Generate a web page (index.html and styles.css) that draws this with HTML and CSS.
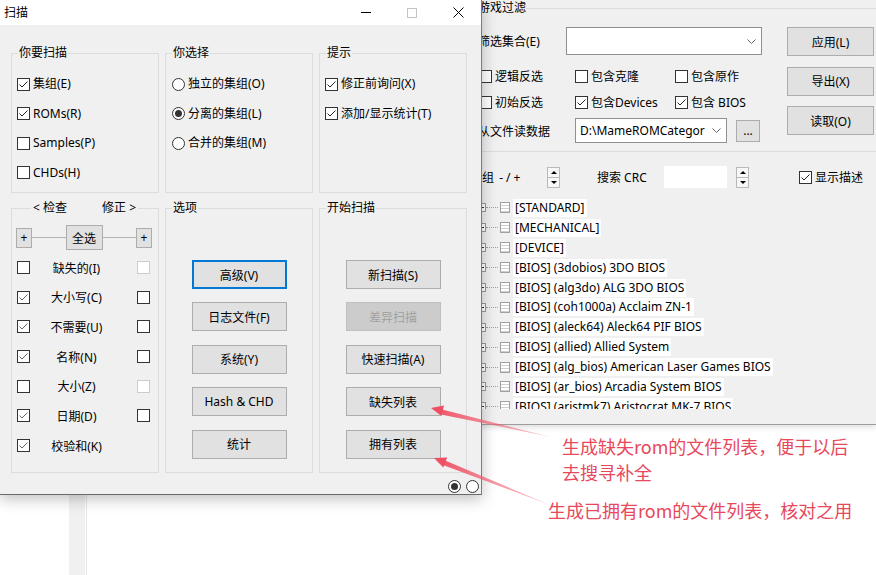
FILE: index.html
```html
<!DOCTYPE html>
<html lang="zh-CN">
<head>
    <meta charset="UTF-8">
    <meta name="viewport" content="width=device-width, initial-scale=1.0">
    <title>扫描</title>
    <link rel="stylesheet" href="styles.css">
</head>
<body>
<div class="desktop">
    <div class="side-strip"></div>

    <!-- background window: game filter -->
    <div class="main-window">
        <div class="group filter">
            <div class="group-title">游戏过滤</div>
            <div class="filter-body">
                <div class="filter-form">
                    <div class="frow frow-set">
                        <span class="flabel w88">筛选集合(E)</span>
                        <div class="combo combo-set">
                            <svg width="9" height="5" viewBox="0 0 9 5"><path d="M0.5 0.5L4.5 4.5L8.5 0.5" fill="none" stroke="#666"/></svg>
                        </div>
                    </div>
                    <div class="frow frow-chk">
                        <label class="fchk first"><span class="cb"></span>逻辑反选</label>
                        <label class="fchk"><span class="cb"></span>包含克隆</label>
                        <label class="fchk last"><span class="cb"></span>包含原作</label>
                    </div>
                    <div class="frow frow-chk second">
                        <label class="fchk first"><span class="cb"></span>初始反选</label>
                        <label class="fchk"><span class="cb"><svg viewBox="0 0 11 11"><path d="M1.5 5.5L4 8L9.5 2.5"/></svg></span>包含Devices</label>
                        <label class="fchk last"><span class="cb"><svg viewBox="0 0 11 11"><path d="M1.5 5.5L4 8L9.5 2.5"/></svg></span>包含 BIOS</label>
                    </div>
                    <div class="frow frow-file">
                        <span class="flabel w97">从文件读数据</span>
                        <div class="combo combo-file">
                            <span>D:\MameROMCategor</span>
                            <svg width="9" height="5" viewBox="0 0 9 5"><path d="M0.5 0.5L4.5 4.5L8.5 0.5" fill="none" stroke="#666"/></svg>
                        </div>
                        <button class="btn dots-btn">...</button>
                    </div>
                </div>
                <div class="filter-buttons">
                    <button class="btn">应用(L)</button>
                    <button class="btn">导出(X)</button>
                    <button class="btn">读取(O)</button>
                </div>
            </div>
        </div>

        <div class="search-row">
            <span class="slabel">集组 <span class="pm">-/+</span></span>
            <span class="spin"><span class="up"></span><span class="down"></span></span>
            <span class="slabel crc">搜索 CRC</span>
            <span class="crc-input"></span>
            <span class="spin spin2"><span class="up"></span><span class="down"></span></span>
            <label class="fchk desc"><span class="cb"><svg viewBox="0 0 11 11"><path d="M1.5 5.5L4 8L9.5 2.5"/></svg></span>显示描述</label>
        </div>

        <ul class="tree">
            <li><span class="exp"></span><span class="twig"></span><span class="doc"></span><span class="tlabel">[STANDARD]</span></li>
            <li><span class="exp"></span><span class="twig"></span><span class="doc"></span><span class="tlabel">[MECHANICAL]</span></li>
            <li><span class="exp"></span><span class="twig"></span><span class="doc"></span><span class="tlabel">[DEVICE]</span></li>
            <li><span class="exp"></span><span class="twig"></span><span class="doc"></span><span class="tlabel">[BIOS] (3dobios) 3DO BIOS</span></li>
            <li><span class="exp"></span><span class="twig"></span><span class="doc"></span><span class="tlabel">[BIOS] (alg3do) ALG 3DO BIOS</span></li>
            <li><span class="exp"></span><span class="twig"></span><span class="doc"></span><span class="tlabel">[BIOS] (coh1000a) Acclaim ZN-1</span></li>
            <li><span class="exp"></span><span class="twig"></span><span class="doc"></span><span class="tlabel">[BIOS] (aleck64) Aleck64 PIF BIOS</span></li>
            <li><span class="exp"></span><span class="twig"></span><span class="doc"></span><span class="tlabel">[BIOS] (allied) Allied System</span></li>
            <li><span class="exp"></span><span class="twig"></span><span class="doc"></span><span class="tlabel">[BIOS] (alg_bios) American Laser Games BIOS</span></li>
            <li><span class="exp"></span><span class="twig"></span><span class="doc"></span><span class="tlabel">[BIOS] (ar_bios) Arcadia System BIOS</span></li>
            <li><span class="exp"></span><span class="twig"></span><span class="doc"></span><span class="tlabel">[BIOS] (aristmk7) Aristocrat MK-7 BIOS</span></li>
        </ul>
    </div>

    <!-- scan dialog -->
    <div class="dialog">
        <div class="titlebar">
            <span class="title">扫描</span>
            <div class="win-ctrls">
                <span><svg width="10" height="1"><rect width="10" height="1" fill="#000"/></svg></span>
                <span><svg width="10" height="10"><rect x="0.5" y="0.5" width="9" height="9" fill="none" stroke="#c4c4c4"/></svg></span>
                <span><svg width="11" height="11"><path d="M0.5 0.5L10.5 10.5M10.5 0.5L0.5 10.5" stroke="#000"/></svg></span>
            </div>
        </div>

        <div class="dlg-body">
            <div class="scan-grid">
                <div class="group">
                    <div class="group-title">你要扫描</div>
                    <ul class="opts">
                        <li><span class="cb"><svg viewBox="0 0 11 11"><path d="M1.5 5.5L4 8L9.5 2.5"/></svg></span>集组(E)</li>
                        <li><span class="cb"><svg viewBox="0 0 11 11"><path d="M1.5 5.5L4 8L9.5 2.5"/></svg></span>ROMs(R)</li>
                        <li><span class="cb"></span>Samples(P)</li>
                        <li><span class="cb"></span>CHDs(H)</li>
                    </ul>
                </div>

                <div class="group">
                    <div class="group-title">你选择</div>
                    <ul class="opts radios">
                        <li><span class="rb"></span>独立的集组(O)</li>
                        <li><span class="rb on"></span>分离的集组(L)</li>
                        <li><span class="rb"></span>合并的集组(M)</li>
                    </ul>
                </div>

                <div class="group">
                    <div class="group-title">提示</div>
                    <ul class="opts">
                        <li><span class="cb"><svg viewBox="0 0 11 11"><path d="M1.5 5.5L4 8L9.5 2.5"/></svg></span>修正前询问(X)</li>
                        <li><span class="cb"><svg viewBox="0 0 11 11"><path d="M1.5 5.5L4 8L9.5 2.5"/></svg></span>添加/显示统计(T)</li>
                    </ul>
                </div>

                <div class="group">
                    <div class="group-title pair-title"><span>&lt; 检查</span><span>修正 &gt;</span></div>
                    <div class="pair-list">
                        <div class="sel-row">
                            <button class="btn plus-btn">+</button>
                            <span class="rule"></span>
                            <button class="btn all-btn">全选</button>
                            <span class="rule"></span>
                            <button class="btn plus-btn">+</button>
                        </div>
                        <div class="pair-row"><span class="cb"></span><span class="name">缺失的(I)</span><span class="cb off"></span></div>
                        <div class="pair-row"><span class="cb soft"><svg viewBox="0 0 11 11"><path d="M1.5 5.5L4 8L9.5 2.5"/></svg></span><span class="name">大小写(C)</span><span class="cb"></span></div>
                        <div class="pair-row"><span class="cb soft"><svg viewBox="0 0 11 11"><path d="M1.5 5.5L4 8L9.5 2.5"/></svg></span><span class="name">不需要(U)</span><span class="cb"></span></div>
                        <div class="pair-row"><span class="cb soft"><svg viewBox="0 0 11 11"><path d="M1.5 5.5L4 8L9.5 2.5"/></svg></span><span class="name">名称(N)</span><span class="cb"></span></div>
                        <div class="pair-row"><span class="cb"></span><span class="name">大小(Z)</span><span class="cb off"></span></div>
                        <div class="pair-row"><span class="cb soft"><svg viewBox="0 0 11 11"><path d="M1.5 5.5L4 8L9.5 2.5"/></svg></span><span class="name">日期(D)</span><span class="cb"></span></div>
                        <div class="pair-row"><span class="cb soft"><svg viewBox="0 0 11 11"><path d="M1.5 5.5L4 8L9.5 2.5"/></svg></span><span class="name">校验和(K)</span></div>
                    </div>
                </div>

                <div class="group">
                    <div class="group-title">选项</div>
                    <div class="btn-col">
                        <button class="btn focus">高级(V)</button>
                        <button class="btn">日志文件(F)</button>
                        <button class="btn">系统(Y)</button>
                        <button class="btn">Hash &amp; CHD</button>
                        <button class="btn">统计</button>
                    </div>
                </div>

                <div class="group">
                    <div class="group-title">开始扫描</div>
                    <div class="btn-col">
                        <button class="btn">新扫描(S)</button>
                        <button class="btn" disabled>差异扫描</button>
                        <button class="btn">快速扫描(A)</button>
                        <button class="btn">缺失列表</button>
                        <button class="btn">拥有列表</button>
                    </div>
                </div>
            </div>

            <div class="dlg-foot">
                <span class="rb on"></span>
                <span class="rb"></span>
            </div>
        </div>
    </div>

    <!-- annotations -->
    <svg class="arrows" width="876" height="575" viewBox="0 0 876 575">
        <defs>
            <linearGradient id="fade1" gradientUnits="userSpaceOnUse" x1="551" y1="437" x2="431" y2="408">
                <stop offset="0" stop-color="#f06a7a" stop-opacity="0.35"/>
                <stop offset="1" stop-color="#ee4f63"/>
            </linearGradient>
            <linearGradient id="fade2" gradientUnits="userSpaceOnUse" x1="550" y1="505" x2="434" y2="458">
                <stop offset="0" stop-color="#f06a7a" stop-opacity="0.35"/>
                <stop offset="1" stop-color="#ee4f63"/>
            </linearGradient>
        </defs>
        <polygon points="551,437 442,409.5 441,414.5" fill="url(#fade1)"/>
        <polygon points="431,408 444,405.5 441.5,416" fill="#ee4f63"/>
        <polygon points="550,505 444,460 442.2,464.8" fill="url(#fade2)"/>
        <polygon points="434,458 447.2,457.6 443.3,467.6" fill="#ee4f63"/>
    </svg>
    <div class="note note-missing">生成缺失rom的文件列表，便于以后<br>去搜寻补全</div>
    <div class="note note-have">生成已拥有rom的文件列表，核对之用</div>
</div>
</body>
</html>
```

FILE: styles.css
```css
* {
    box-sizing: border-box;
}

body {
    margin: 0;
    font-family: "Noto Sans", "Noto Sans CJK SC", sans-serif;
    font-size: 12px;
    color: #000;
    background: #fff;
}

ul {
    list-style: none;
    margin: 0;
    padding: 0;
}

.desktop {
    position: relative;
    width: 876px;
    height: 575px;
    overflow: hidden;
    background: #fff;
}

.side-strip {
    position: absolute;
    left: 69px;
    top: 0;
    width: 17px;
    height: 575px;
    background: #f0f0f0;
    border-right: 1px solid #fff;
    box-shadow: 1px 0 0 #e6e6e6;
}

/* shared controls */
.btn {
    font: inherit;
    color: #000;
    padding: 0;
    background: #e1e1e1;
    border: 1px solid #adadad;
    width: 95px;
    height: 29px;
}

.btn.focus {
    border: 2px solid #0078d7;
}

.btn:disabled {
    background: #cccccc;
    border-color: #bfbfbf;
    color: #a0a0a0;
}

.cb {
    width: 13px;
    height: 13px;
    flex: none;
    border: 1px solid #333;
    background: #fff;
    display: inline-flex;
}

.cb svg {
    width: 11px;
    height: 11px;
    fill: none;
    stroke: #222;
    stroke-width: 1;
}

.cb.soft svg {
    stroke: #666;
}

.cb.off {
    border-color: #cccccc;
}

.rb {
    width: 13px;
    height: 13px;
    flex: none;
    border: 1px solid #333;
    border-radius: 50%;
    background: #fff;
    display: inline-flex;
    align-items: center;
    justify-content: center;
}

.rb.on::after {
    content: "";
    width: 7px;
    height: 7px;
    border-radius: 50%;
    background: #333;
}

.group {
    border: 1px solid #dcdcdc;
}

.group-title {
    width: fit-content;
    margin: -8px 0 0 6px;
    padding: 0 1px;
    line-height: 14px;
    background: #f0f0f0;
}

/* scan dialog */
.dialog {
    position: absolute;
    left: 0;
    top: 0;
    z-index: 2;
    width: 482px;
    height: 495px;
    background: #f0f0f0;
    border-right: 1px solid #7c7c7c;
    border-bottom: 1px solid #6b6b6b;
    box-shadow: 0 4px 14px rgba(0, 0, 0, 0.25);
}

.titlebar {
    height: 25px;
    background: #fff;
    display: flex;
    justify-content: space-between;
    align-items: center;
}

.title {
    padding-left: 4px;
    line-height: 25px;
}

.win-ctrls {
    display: flex;
    height: 25px;
}

.win-ctrls span {
    width: 46px;
    display: flex;
    align-items: center;
    justify-content: center;
}

.dlg-body {
    padding: 28px 0 0 11px;
}

.scan-grid {
    display: grid;
    grid-template-columns: 148px 148px 148px;
    grid-template-rows: 140px 265px;
    column-gap: 6px;
    row-gap: 15px;
}

.opts {
    display: grid;
    grid-auto-rows: 16px;
    row-gap: 13.5px;
    padding: 16px 0 0 5px;
}

.opts.radios {
    padding-left: 6px;
}

.opts li {
    display: flex;
    align-items: center;
    gap: 3px;
    line-height: 16px;
    white-space: nowrap;
}

.pair-title {
    width: 107px;
    margin-left: 19px;
    padding: 0 2px;
    display: flex;
    justify-content: space-between;
}

.pair-list {
    display: grid;
    grid-auto-rows: 29.7px;
    padding: 8px 6px 0 4px;
}

.sel-row {
    display: flex;
    align-items: center;
}

.plus-btn {
    width: 16px;
    height: 20px;
    line-height: 16px;
}

.all-btn {
    width: 37px;
    height: 25px;
}

.rule {
    flex: 1;
    height: 1px;
    background: #b4b4b4;
}

.pair-row {
    display: grid;
    grid-template-columns: 13px 1fr 13px;
    align-items: center;
    margin: 0 2px 0 1px;
}

.pair-row .name {
    text-align: center;
    padding-right: 14px;
    white-space: nowrap;
}

.btn-col {
    display: flex;
    flex-direction: column;
    align-items: center;
    gap: 13.4px;
    padding-top: 45px;
}

.dlg-foot {
    display: flex;
    justify-content: flex-end;
    gap: 5px;
    padding: 7px 2px 0 0;
}

/* background window */
.main-window {
    position: absolute;
    left: 420px;
    top: 0;
    z-index: 1;
    width: 456px;
    height: 425px;
    padding-left: 50px;
    overflow: hidden;
    background: #f0f0f0;
    border-bottom: 1px solid #9d9d9d;
    box-shadow: 0 2px 6px rgba(0, 0, 0, 0.15);
}

.filter {
    margin: 8px -10px 0 0;
    height: 144px;
}

.filter .group-title {
    margin-left: 7px;
    padding: 0;
}

.filter-body {
    display: flex;
    padding-left: 7px;
}

.filter-form {
    width: 309px;
    flex: none;
}

.frow {
    display: flex;
    align-items: center;
    white-space: nowrap;
}

.frow-set {
    margin-top: 12px;
    height: 28px;
}

.frow-chk {
    margin-top: 13px;
    height: 16px;
}

.frow-chk.second {
    margin-top: 10px;
}

.frow-file {
    margin-top: 8px;
    height: 25px;
}

.w88 {
    width: 88px;
}

.w97 {
    width: 97px;
}

.fchk {
    display: flex;
    align-items: center;
    gap: 3px;
    width: 100px;
}

.fchk.first {
    width: 97px;
    padding-left: 1px;
}

.fchk.last {
    width: auto;
}

.combo {
    display: flex;
    align-items: center;
    justify-content: flex-end;
    background: #fff;
    border: 1px solid #8f8f8f;
}

.combo-set {
    width: 196px;
    height: 28px;
    padding-right: 5px;
}

.combo-file {
    width: 152px;
    height: 25px;
    padding: 0 5px 0 4px;
    justify-content: space-between;
    overflow: hidden;
}

.dots-btn {
    width: 24px;
    height: 22px;
    margin-left: 9px;
    line-height: 14px;
}

.filter-buttons {
    display: flex;
    flex-direction: column;
    gap: 10.5px;
    padding-top: 12px;
}

.filter-buttons .btn {
    width: 87px;
}

.search-row {
    display: flex;
    align-items: center;
    height: 24px;
    margin-top: 13px;
    white-space: nowrap;
}

.slabel {
    width: 77px;
}

.slabel .pm {
    margin-left: 2px;
    letter-spacing: 3px;
}

.slabel.crc {
    width: 67px;
    margin-left: 37px;
}

.spin {
    display: flex;
    flex-direction: column;
    width: 13px;
    height: 21px;
    border: 1px solid #b9b9b9;
    background: #f7f7f7;
}

.spin span {
    flex: 1;
    display: flex;
    align-items: center;
    justify-content: center;
}

.spin .down {
    border-top: 1px solid #b9b9b9;
}

.spin .up::after,
.spin .down::after {
    content: "";
    border-left: 3px solid transparent;
    border-right: 3px solid transparent;
}

.spin .up::after {
    border-bottom: 3px solid #000;
}

.spin .down::after {
    border-top: 3px solid #000;
}

.spin2 {
    margin-left: 9px;
}

.crc-input {
    width: 63px;
    height: 22px;
    background: #fff;
}

.fchk.desc {
    width: auto;
    margin-left: 50px;
}

.tree {
    height: 211px;
    margin: 9px 0 0 11px;
    overflow: hidden;
    border-left: 1px dotted #a0a0a0;
}

.tree li {
    display: flex;
    align-items: center;
    height: 19.9px;
    margin-left: -5px;
    white-space: nowrap;
}

.exp {
    width: 9px;
    height: 9px;
    flex: none;
    border: 1px solid #999;
    background: linear-gradient(#333, #333) center / 5px 1px no-repeat,
                linear-gradient(#333, #333) center / 1px 5px no-repeat,
                #fff;
}

.twig {
    width: 12px;
    border-top: 1px dotted #a0a0a0;
}

.doc {
    width: 10px;
    height: 11px;
    flex: none;
    margin-left: 2px;
    border: 1px solid #a0a0a0;
    background: repeating-linear-gradient(#fff 0 2px, #cfcfcf 2px 3px);
}

.tlabel {
    margin-left: 3px;
    padding: 0 2px;
    line-height: 18px;
    background: #fff;
}

/* annotations */
.arrows {
    position: absolute;
    left: 0;
    top: 0;
    z-index: 3;
    pointer-events: none;
}

.note {
    position: absolute;
    z-index: 3;
    font-family: "Noto Sans CJK SC", sans-serif;
    font-size: 18px;
    line-height: 26px;
    color: #e8485c;
    white-space: nowrap;
}

.note-missing {
    left: 562px;
    top: 433px;
}

.note-have {
    left: 548px;
    top: 497px;
}
```
